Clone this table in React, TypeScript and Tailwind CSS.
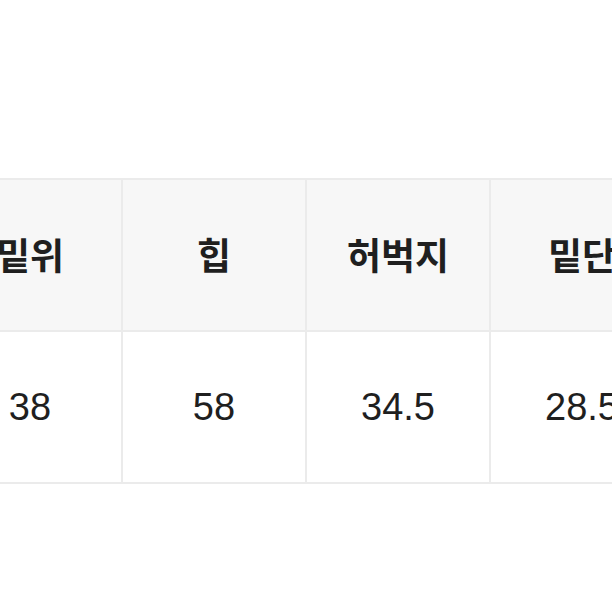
export default function App() {
  const headers = ["밑위", "힙", "허벅지", "밑단"]
  const values = ["38", "58", "34.5", "28.5"]

  return (
    <div className="w-[612px] h-[612px] overflow-hidden bg-white" style={{ fontFamily: '"Liberation Sans", "Noto Sans CJK KR", sans-serif' }}>
      <div className="pt-[178px] ml-[-63px]">
        <table className="border-collapse text-[#1f1f1f]">
          <thead>
            <tr>
              {headers.map((h) => (
                <th
                  key={h}
                  className="w-[184px] min-w-[184px] h-[152px] border-2 border-[#ebebeb] bg-[#f7f7f7] text-[37px] font-bold text-center"
                  style={{ fontFamily: '"Noto Sans CJK KR", sans-serif' }}
                >
                  {h}
                </th>
              ))}
            </tr>
          </thead>
          <tbody>
            <tr>
              {values.map((v, i) => (
                <td
                  key={i}
                  className="w-[184px] min-w-[184px] h-[152px] border-2 border-[#ebebeb] bg-white text-[38px] text-center"
                >
                  {v}
                </td>
              ))}
            </tr>
          </tbody>
        </table>
      </div>
    </div>
  )
}
